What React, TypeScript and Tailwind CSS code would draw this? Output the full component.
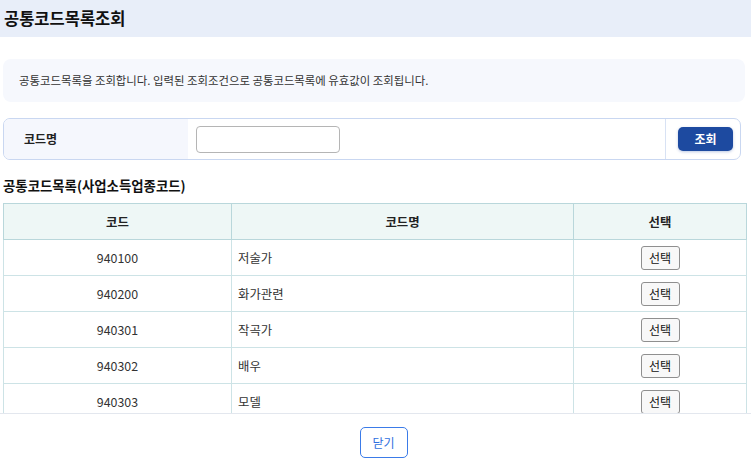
import React from 'react';

const ROWS = [
  { code: '940100', name: '저술가' },
  { code: '940200', name: '화가관련' },
  { code: '940301', name: '작곡가' },
  { code: '940302', name: '배우' },
  { code: '940303', name: '모델' },
];

export default function App() {
  return (
    <div className="w-[751px] h-[464px] bg-white text-[#222] font-['Noto_Sans_CJK_KR','Noto_Sans',sans-serif] overflow-hidden">
      {/* 타이틀 */}
      <div className="h-[37px] bg-[#e8eef9] flex items-center pl-[4px]">
        <h1 className="text-[16.5px] font-bold text-[#111] leading-none">공통코드목록조회</h1>
      </div>

      <div className="px-[3px]">
        {/* 안내 */}
        <div className="mt-[22px] mr-[3px] h-[43px] rounded-[8px] bg-[#f6f8fd] flex items-center pl-[16px]">
          <p className="text-[11.4px] text-[#333]">
            공통코드목록을 조회합니다. 입력된 조회조건으로 공통코드목록에 유효값이 조회됩니다.
          </p>
        </div>

        {/* 검색 */}
        <div className="mt-[16px] mr-[7px] h-[42px] flex rounded-[7px] border border-[#c9d7f1] overflow-hidden">
          <div className="w-[184px] bg-[#f5f7fd] flex items-center pl-[20px] text-[12px] font-semibold text-[#222]">
            코드명
          </div>
          <div className="flex-1 flex items-center pl-[8px]">
            <input
              type="text"
              className="w-[144px] h-[27px] rounded-[4px] border border-[#b5b5b5] bg-white outline-none"
            />
          </div>
          <div className="w-[75px] border-l border-[#d8e2f4] flex items-center pl-[12px]">
            <button className="w-[55px] h-[24px] rounded-[5px] bg-[#1d4aa0] text-white text-[12px] font-semibold shadow-[0_1px_3px_rgba(29,74,160,0.3)]">
              조회
            </button>
          </div>
        </div>

        {/* 목록 */}
        <h2 className="mt-[19px] text-[13.4px] font-bold text-[#111] leading-none">
          공통코드목록(사업소득업종코드)
        </h2>
      </div>

      <div className="mt-[11px] h-[211px] overflow-hidden border-b border-[#e3e7ee] px-[3px]">
        <table className="w-[743px] border-collapse text-[12.4px] table-fixed">
          <colgroup>
            <col className="w-[228px]" />
            <col className="w-[342px]" />
            <col className="w-[173px]" />
          </colgroup>
          <thead>
            <tr className="h-[36px] bg-[#eef7f6]">
              <th className="border border-[#b9d7db] font-semibold text-[#222]">코드</th>
              <th className="border border-[#b9d7db] font-semibold text-[#222]">코드명</th>
              <th className="border border-[#b9d7db] font-semibold text-[#222]">선택</th>
            </tr>
          </thead>
          <tbody>
            {ROWS.map((r) => (
              <tr key={r.code} className="h-[36px]">
                <td className="border border-[#cde3e6] text-center text-[#333]">{r.code}</td>
                <td className="border border-[#cde3e6] pl-[6px] text-[#333]">{r.name}</td>
                <td className="border border-[#cde3e6] text-center">
                  <button className="w-[39px] h-[24px] rounded-[3px] border border-[#8f8f8f] bg-[#f8f8f8] text-[12px] text-[#111]">
                    선택
                  </button>
                </td>
              </tr>
            ))}
          </tbody>
        </table>
      </div>

      <div className="flex justify-center pt-[13px] pl-[16px]">
        <button className="w-[48px] h-[31px] rounded-[5px] border border-[#3b7be8] bg-white text-[12px] text-[#2f6fe0]">
          닫기
        </button>
      </div>
    </div>
  );
}
